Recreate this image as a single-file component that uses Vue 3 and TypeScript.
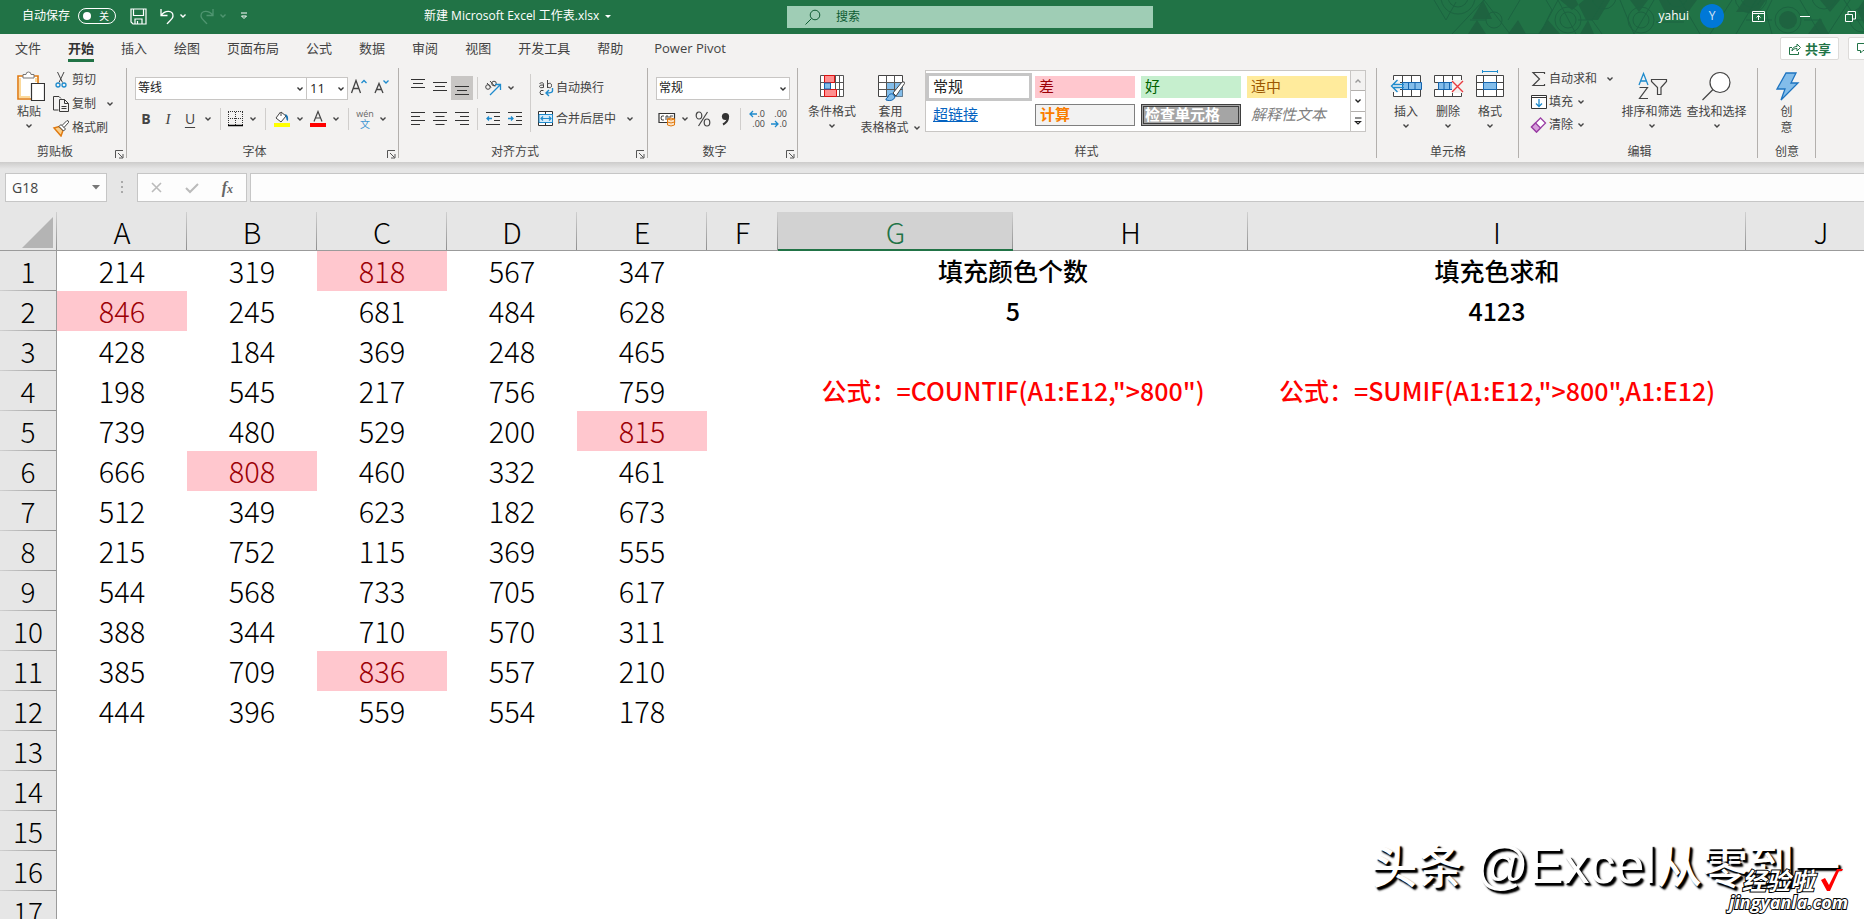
<script setup lang="ts">
import { ref } from 'vue'

interface GalleryStyle {
  label: string
  kind: string
}

const autosave = ref(false)
const query = ref('')
const cellName = ref('G18')
const formula = ref('')
const fontFamily = ref('等线')
const fontSize = ref('11')
const numberFormat = ref('常规')

const tabs: string[] = [
  '文件', '开始', '插入', '绘图', '页面布局', '公式', '数据',
  '审阅', '视图', '开发工具', '帮助', 'Power Pivot',
]
const activeTab = ref('开始')

const gallery: GalleryStyle[] = [
  { label: '常规', kind: 'normal' },
  { label: '差', kind: 'bad' },
  { label: '好', kind: 'good' },
  { label: '适中', kind: 'neutral' },
  { label: '超链接', kind: 'link' },
  { label: '计算', kind: 'calc' },
  { label: '检查单元格', kind: 'check' },
  { label: '解释性文本', kind: 'explain' },
]

const columns: string[] = ['A', 'B', 'C', 'D', 'E', 'F', 'G', 'H', 'I', 'J']
const selectedColumn = 'G'

const values: number[][] = [
  [214, 319, 818, 567, 347],
  [846, 245, 681, 484, 628],
  [428, 184, 369, 248, 465],
  [198, 545, 217, 756, 759],
  [739, 480, 529, 200, 815],
  [666, 808, 460, 332, 461],
  [512, 349, 623, 182, 673],
  [215, 752, 115, 369, 555],
  [544, 568, 733, 705, 617],
  [388, 344, 710, 570, 311],
  [385, 709, 836, 557, 210],
  [444, 396, 559, 554, 178],
]

const notes: Record<number, { count: string; sum: string; red?: boolean }> = {
  1: { count: '填充颜色个数', sum: '填充色求和' },
  2: { count: '5', sum: '4123' },
  4: {
    count: '公式：=COUNTIF(A1:E12,">800")',
    sum: '公式：=SUMIF(A1:E12,">800",A1:E12)',
    red: true,
  },
}

const rowCount = 17
const dataColumns = 5

function valueAt(row: number, col: number): number | undefined {
  return values[row - 1]?.[col - 1]
}
</script>

<template>
  <div class="app">
    <svg class="sprite" aria-hidden="true">
      <symbol id="chev" viewBox="0 0 8 8"><path d="M1.5 2.5 4 5 6.500 2.500" fill="none" stroke="currentColor" stroke-width="1.4" /></symbol>
      <symbol id="launch" viewBox="0 0 9 9"><path d="M.5 8V.5H8M3 3l4.500 4.500M8 4v4H4" fill="none" stroke="#555" /></symbol>
    </svg>

    <header class="titlebar">
      <svg class="pattern" viewBox="0 0 484 34" aria-hidden="true">
        <g fill="#1e6340">
          <path d="M103 0 92 19h20zM97 20l-9 14h18zM196 0l10 20h12L230 0zM208 20l-8 14h14zM180 0h24l-12 10zM128 34l10-14 8 14zM250 0h18l-9 12zM283 8a15 15 0 0 0 28 0l6-8h-38zM364 0l-8 12h22l8-12zM428 34l12-16 9 16zM440 0l10 12 10-12zM477 10l7-10v24z" />
          <circle cx="408" cy="20" r="9" />
          <path d="m168 20 12 14h-22z" />
        </g>
        <g fill="none" stroke="#1c6340">
          <path d="m54 0 12 20L76 2M72 34l32-34M104 0l26 34M90 20h16M130 34h30l12-24-6-10M140 0l-12 20M160 34l18-34M178 0l18 34M198 20h14l12-20M212 20l10 14M240 0l14 34M254 34l20-34M276 22h28M300 0l20 34M330 34l22-34M356 34l20-34M366 20h26M392 0l-6 12 6 22M424 20h18M420 0l20 34M448 34 470 0M470 20h14M464 0l20 30" />
          <circle cx="78" cy="-3" r="10" /><circle cx="78" cy="-3" r="17" />
          <circle cx="114" cy="20" r="8" />
          <circle cx="188" cy="20" r="8" /><circle cx="188" cy="20" r="13" />
          <circle cx="224" cy="-3" r="12" />
          <circle cx="261" cy="20" r="8" /><circle cx="261" cy="20" r="13" />
          <circle cx="297" cy="-3" r="10" /><circle cx="371" cy="-3" r="10" /><circle cx="371" cy="-3" r="16" />
          <circle cx="408" cy="20" r="13" /><circle cx="444" cy="-3" r="12" />
          <circle cx="482" cy="20" r="12" />
        </g>
      </svg>
      <div class="quick">
        <label class="autosave">自动保存
          <input v-model="autosave" type="checkbox" class="hidden-check" />
          <span class="toggle"><i></i>关</span>
        </label>
        <button type="button" class="tb save" aria-label="保存">
          <svg width="17" height="17" viewBox="0 0 17 17"><path d="M1 1h15v15H3L1 14zM3.500 1v6.500h10V1M5 16v-5h7v5M7.500 16v-3" fill="none" stroke="#fff" stroke-width="1.200" /></svg>
        </button>
        <button type="button" class="tb undo" aria-label="撤消">
          <svg width="16" height="17" viewBox="0 0 16 17"><path d="M2 1v6.500h6.500M2.300 7.200C6 2 14 2 14 8c0 3-4 5-6 8" fill="none" stroke="#fff" stroke-width="1.300" /></svg>
          <svg class="chev"><use href="#chev" /></svg>
        </button>
        <button type="button" class="tb redo" aria-label="恢复" disabled>
          <svg width="16" height="17" viewBox="0 0 16 17"><path d="M14 1v6.500H7.500M13.700 7.200C10 2 2 2 2 8c0 3 4 5 6 8" fill="none" stroke="#4f9570" stroke-width="1.300" /></svg>
          <svg class="chev"><use href="#chev" /></svg>
        </button>
        <button type="button" class="tb" aria-label="自定义快速访问工具栏">
          <svg width="8" height="8" viewBox="0 0 8 8"><path d="M1 1h6" stroke="#fff" /><path d="M1.500 4 4 6.500 6.500 4z" fill="none" stroke="#fff" /></svg>
        </button>
      </div>
      <button type="button" class="doc">新建 Microsoft Excel 工作表.xlsx
        <svg width="6" height="3" viewBox="0 0 6 3"><path d="M0 0h6L3 3z" fill="#fff" /></svg>
      </button>
      <label class="search">
        <svg width="16" height="16" viewBox="0 0 16 16"><circle cx="10" cy="6" r="4.800" fill="none" stroke="#0f5c33" /><path d="m6.500 9.500-6 6" stroke="#0f5c33" /></svg>
        <input v-model="query" type="search" placeholder="搜索" aria-label="搜索" />
      </label>
      <div class="account">
        <span>yahui</span><span class="avatar">Y</span>
        <button type="button" class="tb" aria-label="功能区显示选项">
          <svg width="13" height="11" viewBox="0 0 13 11"><path d="M.5.5h12v10H.5zM.5 2.500h12M6.500 9V4.500M4.500 6.500l2-2 2 2" fill="none" stroke="#fff" /></svg>
        </button>
        <button type="button" class="tb" aria-label="最小化"><svg width="10" height="11" viewBox="0 0 10 11"><path d="M0 5.500h10" stroke="#fff" /></svg></button>
        <button type="button" class="tb" aria-label="还原"><svg width="11" height="11" viewBox="0 0 11 11"><path d="M.5 3.500h7v7h-7zM3 3V.5h7.500V8H8" fill="none" stroke="#fff" /></svg></button>
      </div>
    </header>

    <nav class="tabs">
      <button v-for="tab in tabs" :key="tab" type="button" :class="{ active: tab === activeTab }" @click="activeTab = tab">
        <span>{{ tab }}</span>
      </button>
      <div class="share">
        <button type="button">
          <svg width="12" height="12" viewBox="0 0 12 12"><path d="M3 4.500H.5v7h9V9M3 8c0-3 2-4.500 5-4.500V1l3.500 3.500L8 8V5.500C5.500 5.500 4 6 3 8z" fill="none" stroke="#217346" /></svg>共享
        </button>
        <button type="button" aria-label="批注">
          <svg width="14" height="12" viewBox="0 0 14 12"><path d="M.5.500h13v7H6L3.500 10V7.500h-3z" fill="none" stroke="#217346" /></svg>
        </button>
      </div>
    </nav>

    <section class="ribbon" aria-label="开始">
      <div class="group g-clip dialog">
        <div class="body">
          <button type="button" class="big">
            <svg width="32" height="32" viewBox="-1 0 32 32"><path d="M4 6h20v23H4z" fill="#fff" stroke="#e07a10" stroke-width="1.600" /><path d="M6 8v19h10M22 8v4" fill="none" stroke="#fbd99b" stroke-width="2" /><path d="M9 8V4.500h3a2.500 2.500 0 0 1 5 0h3V8z" fill="#fff" stroke="#777" /><path d="M17.500 13.500h13v17h-13z" fill="#fff" stroke="#333" stroke-width="1.200" /></svg>
            <span>粘贴</span><svg class="chev"><use href="#chev" /></svg>
          </button>
          <div class="list">
            <button type="button"><svg width="18" height="18" viewBox="0 0 18 18"><path d="m5.500 1 5 10.500M12 1 7 11.500" fill="none" stroke="#444" /><circle cx="6" cy="14" r="2" fill="none" stroke="#1e8bcd" stroke-width="1.300" /><circle cx="12" cy="14" r="2" fill="none" stroke="#1e8bcd" stroke-width="1.300" /></svg>剪切</button>
            <button type="button"><svg width="18" height="18" viewBox="0 0 18 18"><path d="M6.500 15h-5V1.500H7L9 3.500M7.500 4.500h5l4 4v8h-9zM12.500 4.500v4h4M9.500 11.500h5M9.500 13.500h5" fill="none" stroke="#3b3a39" /></svg>复制<svg class="chev far"><use href="#chev" /></svg></button>
            <button type="button"><svg width="18" height="18" viewBox="0 0 18 18"><path d="m2 9 5-1.500 4 4L9 17 2 9z" fill="#fbd08b" stroke="#e07a10" stroke-width="1.500" /><path d="m7 7.500 2-2 4.500 4.500-2 2zM10 6.500 15 1.500q2 0 1.500 2L12 8.500" fill="#fff" stroke="#444" /></svg>格式刷</button>
          </div>
        </div>
        <h2>剪贴板</h2>
        <button type="button" class="launch" aria-label="剪贴板设置"><svg><use href="#launch" /></svg></button>
      </div>

      <div class="group g-font dialog">
        <div class="rows">
          <div class="row">
            <label class="combo wide"><select v-model="fontFamily" aria-label="字体"><option>等线</option></select><svg class="chev"><use href="#chev" /></svg></label>
            <label class="combo narrow"><select v-model="fontSize" aria-label="字号"><option>11</option></select><svg class="chev"><use href="#chev" /></svg></label>
            <button type="button" class="ic" aria-label="增大字号"><svg width="18" height="18" viewBox="0 0 18 18"><path d="M1.500 14 6 1.500 10.500 14M3.200 9.500h5.600" fill="none" stroke="#444" stroke-width="1.300" /><path d="m11.500 4 2.500-2.500L16.500 4" fill="none" stroke="#1e8bcd" stroke-width="1.300" /></svg></button>
            <button type="button" class="ic" aria-label="减小字号"><svg width="18" height="18" viewBox="0 0 18 18"><path d="m3 14 4-9.500L11 14M4.500 10.500h5" fill="none" stroke="#444" stroke-width="1.300" /><path d="M11.500 1.500 14 4l2.500-2.500" fill="none" stroke="#1e8bcd" stroke-width="1.300" /></svg></button>
          </div>
          <div class="row">
            <button type="button" class="ic b">B</button>
            <button type="button" class="ic i">I</button>
            <button type="button" class="ic u">U</button>
            <button type="button" class="dd" aria-label="下划线选项"><svg class="chev"><use href="#chev" /></svg></button>
            <i class="sep"></i>
            <button type="button" class="ic slim" aria-label="边框"><svg width="16" height="16" viewBox="0 0 16 16"><path d="M.5 1v13M14.500 1v13M0 .5h15M7.500 1v13M0 7.500h15" fill="none" stroke="#333" stroke-dasharray="1 1" /><path d="M0 14.500h15" stroke="#000" stroke-width="1.500" /></svg></button>
            <button type="button" class="dd" aria-label="边框选项"><svg class="chev"><use href="#chev" /></svg></button>
            <i class="sep"></i>
            <button type="button" class="ic" aria-label="填充颜色"><svg width="18" height="18" viewBox="0 0 18 18"><path d="M7.500 2 3 8l5 4 5-6-5-4v4" fill="#fff" stroke="#444" /><path d="M12 4q4 1 3 7-2-1-2-4z" fill="#1573b5" /><path d="M1 13h16v4H1z" fill="#ff0" /></svg></button>
            <button type="button" class="dd" aria-label="填充选项"><svg class="chev"><use href="#chev" /></svg></button>
            <button type="button" class="ic" aria-label="字体颜色"><svg width="18" height="18" viewBox="0 0 18 18"><path d="m5 11.500 4-10 4 10M6.500 8h5" fill="none" stroke="#444" stroke-width="1.200" /><path d="M1 13h16v4H1z" fill="#f00" /></svg></button>
            <button type="button" class="dd" aria-label="颜色选项"><svg class="chev"><use href="#chev" /></svg></button>
            <i class="sep"></i>
            <button type="button" class="ic wen"><span>wén</span><b>文</b></button>
            <button type="button" class="dd" aria-label="拼音选项"><svg class="chev"><use href="#chev" /></svg></button>
          </div>
        </div>
        <h2>字体</h2>
        <button type="button" class="launch" aria-label="字体设置"><svg><use href="#launch" /></svg></button>
      </div>

      <div class="group g-align dialog">
        <div class="body">
          <div class="rows">
            <div class="row">
              <button type="button" class="ic" aria-label="顶端对齐"><svg width="14" height="20" viewBox="0 0 14 20"><path d="M0 1.500h14M2 5.500h10M0 9.500h14" stroke="#333" /></svg></button>
              <button type="button" class="ic" aria-label="垂直居中"><svg width="14" height="20" viewBox="0 0 14 20"><path d="M0 4.500h14M2 8.500h10M0 12.500h14" stroke="#333" /></svg></button>
              <button type="button" class="ic on" aria-label="底端对齐"><svg width="14" height="20" viewBox="0 0 14 20"><path d="M0 8.500h14M2 12.500h10M0 16.500h14" stroke="#333" /></svg></button>
              <i class="sep"></i>
              <button type="button" class="ic" aria-label="方向"><svg width="18" height="18" viewBox="0 0 18 18"><g fill="none" stroke="#444"><circle cx="4" cy="8" r="2.300" /><path d="m3 4 4 4.500M6 2l5 5.500" /><circle cx="10" cy="4.500" r="2.300" /></g><path d="m6 16 10-10M11 5.500h5.500V11" fill="none" stroke="#1e8bcd" stroke-width="1.300" /></svg></button>
              <button type="button" class="dd" aria-label="方向选项"><svg class="chev"><use href="#chev" /></svg></button>
            </div>
            <div class="row">
              <button type="button" class="ic" aria-label="左对齐"><svg width="14" height="14" viewBox="0 0 14 14"><path d="M0 .5h14M0 4.500h9M0 8.500h14M0 12.500h9" stroke="#333" /></svg></button>
              <button type="button" class="ic" aria-label="居中"><svg width="14" height="14" viewBox="0 0 14 14"><path d="M0 .5h14M2.500 4.500h9M0 8.500h14M2.500 12.500h9" stroke="#333" /></svg></button>
              <button type="button" class="ic" aria-label="右对齐"><svg width="14" height="14" viewBox="0 0 14 14"><path d="M0 .5h14M5 4.500h9M0 8.500h14M5 12.500h9" stroke="#333" /></svg></button>
              <i class="sep"></i>
              <button type="button" class="ic" aria-label="减少缩进量"><svg width="14" height="14" viewBox="0 0 14 14"><path d="M0 .5h14M8 4.500h6M8 8.500h6M0 12.500h14" stroke="#333" /><path d="M6 6.500H1M3 4.500l-2 2 2 2" fill="none" stroke="#1e8bcd" stroke-width="1.300" /></svg></button>
              <button type="button" class="ic" aria-label="增加缩进量"><svg width="14" height="14" viewBox="0 0 14 14"><path d="M0 .5h14M8 4.500h6M8 8.500h6M0 12.500h14" stroke="#333" /><path d="M0 6.500h5M3 4.500l2 2-2 2" fill="none" stroke="#1e8bcd" stroke-width="1.300" /></svg></button>
            </div>
          </div>
          <i class="sep tall"></i>
          <div class="rows">
            <button type="button" class="txt"><svg width="16" height="18" viewBox="0 0 16 18"><g fill="none" stroke="#444"><path d="M1.500 4.500q4-2 4 1v3q-4 1-4-1t4-1.500" /><path d="M9.500 1v8M9.500 5q4-2 4 1.500t-4 1.500" /><path d="M5.500 11.500q-3.500-1-3.500 2t3.500 2" /></g><path d="M14.500 9v3q0 2-6 2M11 11l-3 3 3 3" fill="none" stroke="#1e8bcd" stroke-width="1.400" /></svg>自动换行</button>
            <button type="button" class="txt"><svg width="16" height="16" viewBox="0 0 16 16"><path d="M.5.5h14v14H.5zM7.500.5v3M7.500 12v3" fill="#fff" stroke="#333" /><path d="M1 3.500h13.500v8H1z" fill="#d6ecfb" stroke="#1e8bcd" /><path d="M3 7.500h10M5 5.500l-2 2 2 2M11 5.500l2 2-2 2" fill="none" stroke="#1e8bcd" stroke-width="1.200" /></svg>合并后居中<svg class="chev far"><use href="#chev" /></svg></button>
          </div>
        </div>
        <h2>对齐方式</h2>
        <button type="button" class="launch" aria-label="对齐设置"><svg><use href="#launch" /></svg></button>
      </div>

      <div class="group g-num dialog">
        <div class="rows">
          <div class="row"><label class="combo fmt"><select v-model="numberFormat" aria-label="数字格式"><option>常规</option></select><svg class="chev"><use href="#chev" /></svg></label></div>
          <div class="row">
            <button type="button" class="ic" aria-label="会计数字格式"><svg width="18" height="16" viewBox="0 0 18 16"><path d="M1 2.500h15.500v9H1z" fill="#fff" stroke="#333" stroke-width="1.200" /><path d="M6 5q-3-1-3 2t3 2M8 9V5h2v4M12 9V5h3" fill="none" stroke="#444" /><path d="M9.500 8q3.500-2 7 0v6q-3.500 2-7 0z" fill="#fce4c8" stroke="#e07a10" /><path d="M9.500 8q3.500 2 7 0M9.500 11q3.500 2 7 0" fill="none" stroke="#e07a10" /></svg></button>
            <button type="button" class="dd" aria-label="会计选项"><svg class="chev"><use href="#chev" /></svg></button>
            <button type="button" class="ic" aria-label="百分比样式"><svg width="16" height="16" viewBox="0 0 16 16"><g fill="none" stroke="#444" stroke-width="1.200"><ellipse cx="4" cy="4.500" rx="2.800" ry="3.500" /><ellipse cx="12" cy="11.500" rx="2.800" ry="3.500" /><path d="M12.500 1 3.500 15" /></g></svg></button>
            <button type="button" class="ic" aria-label="千位分隔样式"><svg width="10" height="14" viewBox="0 0 10 14"><circle cx="5.500" cy="4.500" r="3.600" fill="#333" /><path d="M8 5q0 5-5 7.500" fill="none" stroke="#333" stroke-width="2" /></svg></button>
            <i class="sep"></i>
            <button type="button" class="ic dec" aria-label="增加小数位数"><span><svg width="8" height="8" viewBox="0 0 8 8"><path d="M8 4H1M4 1 1 4l3 3" fill="none" stroke="#1e8bcd" stroke-width="1.300" /></svg>.0</span><span>.00</span></button>
            <button type="button" class="ic dec" aria-label="减少小数位数"><span>.00</span><span><svg width="8" height="8" viewBox="0 0 8 8"><path d="M0 4h7M4 1l3 3-3 3" fill="none" stroke="#1e8bcd" stroke-width="1.300" /></svg>.0</span></button>
          </div>
        </div>
        <h2>数字</h2>
        <button type="button" class="launch" aria-label="数字设置"><svg><use href="#launch" /></svg></button>
      </div>

      <div class="group g-style">
        <div class="body">
          <button type="button" class="big">
            <svg width="32" height="32" viewBox="0 0 32 32"><path d="M4.500 5.500h23v21h-23zM4.500 12.500h23M4.500 19.500h23M11 5.500v21M19.500 5.500v21M23.500 5.500v21" fill="#fff" stroke="#555" /><path d="M8.500 5.500h10v7h-10zM8.500 19.500h12v7h-12z" fill="#ff8f8f" stroke="#d11" /><path d="M8.500 13h6v6h-6z" fill="#83bdea" stroke="#1565ae" /></svg>
            <span>条件格式</span><svg class="chev"><use href="#chev" /></svg>
          </button>
          <button type="button" class="big tbl">
            <svg width="32" height="32" viewBox="0 0 32 32"><path d="M3.500 5.500h24v21h-24z" fill="#fff" stroke="#444" /><path d="M11.500 12.500h16v14h-16z" fill="#83bdea" /><path d="M3.500 12.500h24M3.500 19.500h24M11.500 5.500v21M19.500 5.500v21" fill="none" stroke="#555" /><path d="M11 30q-1-1 2-3 1-4 5-3l2 3q-2 5-9 3z" fill="#83bdea" stroke="#1565ae" /><path d="m18 23 9-11q3-1 2.500 1.500L21 26z" fill="#fff" stroke="#444" /></svg>
            <span>套用</span><span class="line">表格格式<svg class="chev"><use href="#chev" /></svg></span>
          </button>
          <div class="gallery">
            <div class="swatches">
              <button v-for="s in gallery" :key="s.kind" type="button" :class="['swatch', s.kind]"><span>{{ s.label }}</span></button>
            </div>
            <div class="scroll">
              <button type="button" class="dim" aria-label="上一行"><svg class="chev up"><use href="#chev" /></svg></button>
              <button type="button" aria-label="下一行"><svg class="chev"><use href="#chev" /></svg></button>
              <button type="button" aria-label="其他样式"><svg width="8" height="9" viewBox="0 0 8 9"><path d="M1 1h6.500M1.500 4.500 4 7l2.500-2.500z" fill="none" stroke="#222" stroke-width="1.200" /></svg></button>
            </div>
          </div>
        </div>
        <h2>样式</h2>
      </div>

      <div class="group g-cells">
        <div class="body">
          <button type="button" class="big">
            <svg width="32" height="32" viewBox="0 0 32 32"><path d="M3.500 5.500h27v21h-27zM3.500 12.500h27M3.500 19.500h27M12.500 5.500v7M21.500 5.500v7M12.500 19.500v7M21.500 19.500v7" fill="#fff" stroke="#444" /><path d="M12.500 12.500h19v7h-19zM18.500 12.500v7M25 12.500v7" fill="#83bdea" stroke="#1565ae" /><path d="M0 10h10v12H0z" fill="#f3f2f1" /><path d="M14 14.500H3.500M14 17.500H3.500M7.500 10 1.500 16l6 6" fill="none" stroke="#1e8bcd" stroke-width="1.400" /></svg>
            <span>插入</span><svg class="chev"><use href="#chev" /></svg>
          </button>
          <button type="button" class="big">
            <svg width="32" height="32" viewBox="0 0 32 32"><path d="M2.500 5.500h27v7h-27zM2.500 19.500h27v7h-27zM11.500 5.500v7M20.500 5.500v7M11.500 19.500v7M20.500 19.500v7" fill="#fff" stroke="#444" /><path d="M6.500 12.500h16v7h-16zM12 12.500v7M17.500 12.500v7" fill="#83bdea" stroke="#1565ae" /><path d="M20 10h11v13H20z" fill="#f3f2f1" /><path d="m20 11 11 11M31 11 20 22" fill="none" stroke="#e8393f" stroke-width="1.400" /></svg>
            <span>删除</span><svg class="chev"><use href="#chev" /></svg>
          </button>
          <button type="button" class="big">
            <svg width="32" height="32" viewBox="0 0 32 32"><path d="M2.500 5.500h27v21h-27zM2.500 12.500h27M2.500 19.500h27M9.500 5.500v21M22.500 5.500v21" fill="#fff" stroke="#444" /><path d="M9.500 12.500h13v7h-13z" fill="#83bdea" stroke="#1565ae" /><path d="M8.500 1.500h15M8.500 0v3M23.500 0v3" stroke="#1e8bcd" /></svg>
            <span>格式</span><svg class="chev"><use href="#chev" /></svg>
          </button>
        </div>
        <h2>单元格</h2>
      </div>

      <div class="group g-edit">
        <div class="body">
          <div class="list">
            <button type="button"><svg width="18" height="18" viewBox="0 0 18 18"><path d="M14.500 4V2.500H3L9.500 9 3 15.500h11.500V14" fill="none" stroke="#444" stroke-width="1.200" /></svg>自动求和<svg class="chev far"><use href="#chev" /></svg></button>
            <button type="button"><svg width="18" height="18" viewBox="0 0 18 18"><path d="M1.500 2.500h15v13h-15zM1.500 4.500h15" fill="#fff" stroke="#333" /><path d="M9 6v7.500M6 10.500l3 3 3-3" fill="none" stroke="#1e8bcd" stroke-width="1.300" /></svg>填充<svg class="chev near"><use href="#chev" /></svg></button>
            <button type="button"><svg width="18" height="18" viewBox="0 0 18 18"><path d="m1.500 11 9-9 5 5-9 9z" fill="#fff" stroke="#9b3fa5" stroke-width="1.300" /><path d="m1.500 11 4-4 5 5-4 4z" fill="#d7a0dc" stroke="#9b3fa5" stroke-width="1.300" /></svg>清除<svg class="chev near"><use href="#chev" /></svg></button>
          </div>
          <button type="button" class="big">
            <svg width="32" height="32" viewBox="0 0 32 32"><path d="m3 15 4.500-11.500L12 15M4.500 11h6" fill="none" stroke="#1e8bcd" stroke-width="1.300" /><path d="M3.500 17.500h8l-8 11h8.500M15.500 9.500h15v2l-5.500 6v7h-3.500v-7l-6-6z" fill="none" stroke="#444" stroke-width="1.200" /></svg>
            <span>排序和筛选</span><svg class="chev"><use href="#chev" /></svg>
          </button>
          <button type="button" class="big">
            <svg width="32" height="32" viewBox="0 0 32 32"><circle cx="19" cy="12.500" r="10" fill="#fff" stroke="#444" stroke-width="1.200" /><path d="M12 19.500 1.500 30" stroke="#444" stroke-width="1.200" /></svg>
            <span>查找和选择</span><svg class="chev"><use href="#chev" /></svg>
          </button>
        </div>
        <h2>编辑</h2>
      </div>

      <div class="group g-idea">
        <div class="body">
          <button type="button" class="big">
            <svg width="32" height="32" viewBox="0 0 32 32"><path d="M15 3h10l-5 10h7L10 30l4-11H6z" fill="#83bdea" stroke="#1e74c0" stroke-width="1.300" /></svg>
            <span>创</span><span>意</span>
          </button>
        </div>
        <h2>创意</h2>
      </div>
    </section>

    <section class="formulabar">
      <label class="namebox"><input v-model="cellName" type="text" aria-label="名称框" /><svg width="8" height="5" viewBox="0 0 8 5"><path d="M0 0h8L4 4.500z" fill="#777" /></svg></label>
      <i class="grip"></i>
      <div class="fx">
        <button type="button" aria-label="取消"><svg width="14" height="14" viewBox="0 0 14 14"><path d="m2 2 9 9M11 2l-9 9" stroke="#bbb" stroke-width="1.600" /></svg></button>
        <button type="button" aria-label="输入"><svg width="14" height="14" viewBox="0 0 14 14"><path d="m1 7 4 4 8-8" fill="none" stroke="#bbb" stroke-width="2" /></svg></button>
        <button type="button" class="fn" aria-label="插入函数"><i>f</i><i class="x">x</i></button>
      </div>
      <input v-model="formula" class="entry" type="text" aria-label="编辑栏" />
    </section>

    <main class="sheet">
      <table>
        <colgroup>
          <col class="c-head" />
          <col v-for="c in columns" :key="c" :class="'c-' + c" />
        </colgroup>
        <thead>
          <tr>
            <th class="corner"><svg width="31" height="31" viewBox="0 0 31 31"><path d="M31 0v31H0z" fill="#b4b4b4" /></svg></th>
            <th v-for="c in columns" :key="c" scope="col" :class="{ picked: c === selectedColumn }">{{ c }}</th>
          </tr>
        </thead>
        <tbody>
          <tr v-for="r in rowCount" :key="r">
            <th scope="row">{{ r }}</th>
            <td v-for="c in dataColumns" :key="c" :class="{ hot: (valueAt(r, c) ?? 0) > 800 }">{{ valueAt(r, c) }}</td>
            <td></td>
            <td colspan="2" :class="['note', { red: notes[r]?.red }]">{{ notes[r]?.count }}</td>
            <td :class="['note', { red: notes[r]?.red }]">{{ notes[r]?.sum }}</td>
            <td></td>
          </tr>
        </tbody>
      </table>
    </main>

    <div class="mark author">头条 <span>@Excel</span>从零到一</div>
    <div class="mark site">
      <div class="name">经验啦<svg width="24" height="24" viewBox="0 0 24 24"><path d="m1 12 4-2 4 7L17 1h6l-1 2h-3L10 23H7z" fill="#f00" /></svg></div>
      <div class="url">jingyanla.com</div>
    </div>
  </div>
</template>

<style>
html, body { margin: 0; overflow: hidden; }
</style>

<style scoped>
.app { position: relative; display: flex; flex-direction: column; height: 100vh; overflow: hidden; background: #fff; color: #444; font: 12px/16px "Open Sans", "Noto Sans CJK SC", sans-serif; }
* { box-sizing: border-box; }
button { display: flex; align-items: center; margin: 0; padding: 0; border: 0; background: none; color: inherit; font: inherit; white-space: nowrap; }
input, select { margin: 0; border: 0; padding: 0; background: none; color: inherit; font: inherit; outline: 0; }
svg { flex: none; display: block; }
.sprite { position: absolute; width: 0; height: 0; }
.chev { width: 8px; height: 8px; }
.up { transform: rotate(180deg); }

.titlebar { position: relative; flex: none; display: flex; align-items: center; height: 34px; background: #217346; color: #fff; }
.pattern { position: absolute; right: 0; top: 0; width: 484px; height: 34px; }
.titlebar > :not(.pattern) { position: relative; }
.quick { display: flex; align-items: center; flex: 0 0 424px; padding: 0 0 2px 22px; }
.autosave { display: flex; align-items: center; gap: 8px; margin-right: 14px; }
.hidden-check { position: absolute; width: 1px; height: 1px; opacity: 0; }
.toggle { display: flex; align-items: center; gap: 8px; width: 38px; height: 16px; padding: 0 4px; border: 1px solid #fff; border-radius: 8px; font-size: 10px; }
.toggle i { width: 8px; height: 8px; border-radius: 50%; background: #fff; }
.tb { gap: 4px; }
.save, .undo { margin-right: 12px; }
.redo { color: #4f9570; margin-right: 13px; }
.doc { gap: 6px; flex: 0 0 363px; padding-bottom: 2px; }
.search { display: flex; align-items: center; gap: 15px; flex: 0 1 366px; height: 22px; padding: 0 18px; background: #9fcdb5; color: #0f5c33; }
.search input { flex: 1; min-width: 0; }
.search input::placeholder { color: #0f5c33; opacity: 1; }
.account { display: flex; align-items: center; flex: 1 0 auto; justify-content: flex-end; padding: 0 8px 2px 0; }
.avatar { width: 24px; height: 24px; margin: 0 28px 0 11px; border-radius: 50%; background: #0078d7; line-height: 24px; text-align: center; color: #d6e4f5; }
.account .tb + .tb { margin-left: 35px; }

.tabs { flex: none; display: flex; height: 32px; padding-left: 1px; background: #f3f2f1; font-size: 13px; line-height: 26px; }
.tabs > button { align-items: flex-start; padding: 1px 13px 0 14px; }
.tabs > button span { height: 27px; border-bottom: 3px solid transparent; line-height: 26px; }
.tabs .active { color: #333; font-weight: bold; }
.tabs .active span { border-color: #217346; }
.tabs > button:nth-child(12) { padding-left: 18px; }
.share { display: flex; gap: 9px; margin: 3px -15px 6px auto; }
.share button { gap: 4px; height: 23px; padding: 0 7px 0 8px; border: 1px solid #dddbd9; border-radius: 2px; background: #fff; color: #217346; font-weight: bold; line-height: 20px; }

.ribbon { flex: none; display: flex; height: 96px; background: #f3f2f1; }
.group { position: relative; flex: none; display: flex; flex-direction: column; }
.group::after { content: ""; position: absolute; right: 0; top: 2px; bottom: 4px; width: 1px; background: #b3b0ad; }
.g-clip { width: 127px; padding-left: 8px; }
.g-font { width: 272px; padding-left: 8px; --sep: 5px; }
.g-align { width: 249px; padding-left: 8px; --sep: 4px; }
.g-num { width: 150px; padding-left: 8px; --sep: 4px; }
.g-style { width: 579px; padding-left: 6px; }
.g-cells { width: 142px; padding-left: 8px; }
.g-edit { width: 239px; padding-left: 10px; }
.g-idea { width: 58px; }
.body { display: flex; height: 76px; }
.group h2 { margin: auto 0 0; height: 20px; font: inherit; line-height: 20px; text-align: center; }
.group:not(.g-idea) h2 { margin-left: -8px; }
.dialog h2 { padding-right: 17px; }
.launch { position: absolute; right: 3px; bottom: 3px; }
.launch svg { width: 9px; height: 9px; }
.big { flex-direction: column; flex: none; width: 42px; height: 76px; padding-top: 4px; }
.big svg:first-child { margin-bottom: 2px; }
.big .chev { margin-top: 2px; }
.line { display: flex; align-items: center; gap: 4px; }
.g-style .big { width: 56px; }
.g-style .tbl { width: 61px; }
.g-edit .big { width: 65px; }
.g-idea .big { width: 57px; }
.list { padding-top: 2px; }
.list button { height: 24px; gap: 2px; padding-left: 2px; }
.g-edit .list { width: 90px; padding-top: 1px; }
.g-edit .list button { height: 23px; gap: 1px; padding-left: 1px; }
.far { margin-left: 8px; }
.near { margin-left: 3px; }

.rows { padding-top: 10px; display: flex; flex-direction: column; gap: 7px; }
.row { display: flex; align-items: center; height: 24px; }
.ic { justify-content: center; flex: none; width: 22px; height: 24px; }
.slim { width: 20px; }
.dd { justify-content: center; flex: none; width: 14px; height: 24px; }
.on { background: #c8c6c4; }
.b { font-weight: bold; font-size: 14px; }
.i { font: italic 15px/20px "Liberation Serif", serif; }
.u { font-size: 14px; text-decoration: underline; text-underline-offset: 3px; }
.sep { flex: none; width: 1px; height: 22px; margin: 0 var(--sep); background: #d0cecc; }
.tall { height: 58px; margin-top: 8px; }
.combo { position: relative; display: flex; height: 23px; border: 1px solid #c8c6c4; background: #fff; color: #222; }
.combo select { appearance: none; width: 100%; padding-left: 2px; font-size: 12px; }
.combo .chev { position: absolute; right: 2px; top: 7px; pointer-events: none; color: #333; }
.wide { width: 172px; }
.narrow { width: 41px; border-left: 0; }
.narrow select { font-size: 13px; padding-left: 3px; }
.fmt { width: 134px; }
.txt { height: 24px; gap: 2px; padding-left: 3px; }
.wen { flex-direction: column; justify-content: center; color: #666; font-size: 9px; line-height: 10px; }
.wen b { color: #3f97d3; font-weight: normal; font-size: 10px; line-height: 10px; }
.dec { flex-direction: column; align-items: flex-end; justify-content: center; padding-right: 2px; font-size: 9px; line-height: 10px; }
.dec span { display: flex; align-items: center; }

.gallery { display: flex; height: 62px; width: 441px; margin: 4px 0 0 4px; border: 1px solid #c8c6c4; background: #fff; }
.swatches { flex: 1; display: grid; grid-template-columns: repeat(4, 106px); grid-auto-rows: 28px; padding-top: 2px; }
.swatch { align-items: stretch; padding: 3px; font-size: 15px; line-height: 20px; color: #222; }
.swatch span { flex: 1; padding-left: 4px; text-align: left; }
.swatch.normal { padding: 0; border: 3px solid #c6c6c6; }
.bad span { background: #ffc7ce; color: #9c0006; }
.good span { background: #c6efce; color: #006100; }
.neutral span { background: #ffeb9c; color: #9c5700; }
.link span { color: #0563c1; text-decoration: underline; }
.calc span { border: 1px solid #7f7f7f; background: #f2f2f2; color: #fa7d00; font-weight: bold; line-height: 18px; }
.check span { padding-left: 1px; border: 3px double #3f3f3f; background: #a5a5a5; color: #fff; font-weight: bold; line-height: 14px; }
.explain span { color: #7f7f7f; font-style: italic; }
.scroll { display: flex; flex-direction: column; width: 15px; border-left: 1px solid #c8c6c4; }
.scroll button { flex: 1; justify-content: center; color: #222; border-bottom: 1px solid #b3b0ad; }
.scroll button:last-child { border: 0; }
.scroll .dim { color: #999; background: #f3f2f1; }

.formulabar { flex: none; display: flex; height: 50px; padding: 11px 0 10px 5px; background: linear-gradient(#cdcccb, #e6e6e6 7px); color: #444; }
.formulabar .namebox, .fx, .entry { height: 29px; border: 1px solid #c6c6c6; background: #fdfdfd; }
.namebox { display: flex; align-items: center; width: 102px; padding: 0 6px; }
.namebox input { flex: 1; min-width: 0; font-size: 14px; }
.grip { width: 2px; height: 12px; margin: 8px 14px 0 14px; background: repeating-linear-gradient(#aaa 0 2px, transparent 2px 5px); }
.fx { display: flex; width: 110px; padding: 0 1px; }
.fx button { flex: 1; justify-content: center; }
.fn { font: bold 16px/18px "Liberation Serif", serif; color: #666; }
.fn .x { font-size: 12px; margin-top: 3px; }
.entry { flex: 1; min-width: 0; margin-left: 3px; border-right: 0; padding: 0 6px; font-size: 14px; }

.sheet { flex: 1; min-height: 0; overflow: hidden; background: #fff; }
table { table-layout: fixed; width: 1896px; border-collapse: separate; border-spacing: 0; font: 29px/36px "Noto Sans CJK SC", sans-serif; font-weight: 300; color: #000; }
.c-head { width: 57px; }
.c-A, .c-B, .c-C, .c-D, .c-E { width: 130px; }
.c-F { width: 71px; }
.c-G { width: 235px; }
.c-H { width: 235px; }
.c-I { width: 498px; }
.c-J { width: 150px; }
th, td { padding: 0; text-align: center; white-space: nowrap; }
th { font-weight: inherit; background: #e6e6e6; }
thead th { height: 39px; border-bottom: 1px solid #9b9b9b; background: linear-gradient(#d0d0d0, #8f8f8f) right / 1px 100% no-repeat #e6e6e6; }
thead .picked { border-bottom: 2px solid #217346; background-color: #d2d2d2; color: #217346; }
.corner svg { margin: 3px 0 0 22px; }
tbody th { height: 40px; font-size: 28px; border-right: 1px solid #9b9b9b; background: linear-gradient(90deg, #d0d0d0, #8f8f8f) bottom / 100% 1px no-repeat #e6e6e6; }
tbody td { height: 40px; padding-bottom: 2px; }
.hot { background: #ffc7ce; color: #9c0006; }
.note { font-size: 25px; font-weight: 500; }
.red { color: #f00; }

.mark { position: absolute; white-space: nowrap; color: #fff; pointer-events: none; }
.author { right: 24px; bottom: 24px; font: 500 46px/56px "Liberation Sans", "Noto Sans CJK SC", sans-serif; text-shadow: 2px 2px 1px #000, 3px 3px 2px #000; }
.author span { font-size: 52px; }
.site { right: 16px; bottom: 7px; text-align: right; font: italic bold 24px/24px "Noto Sans CJK SC", sans-serif; -webkit-text-stroke: 2px #000; paint-order: stroke fill; }
.name { display: flex; justify-content: flex-end; gap: 6px; margin-right: 4px; }
.url { font-family: "Open Sans", sans-serif; font-size: 18px; line-height: 20px; }
</style>
